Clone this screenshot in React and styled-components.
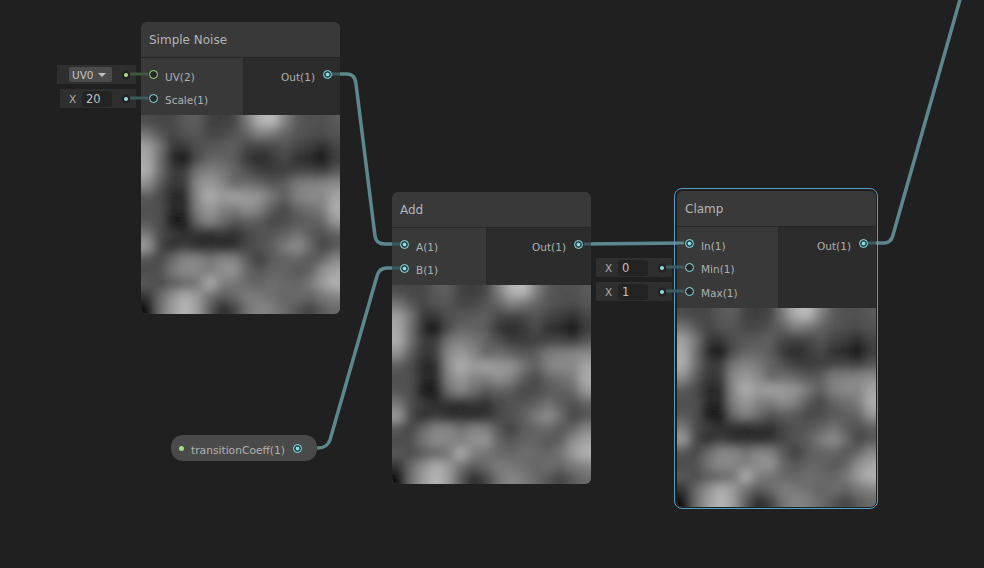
import styled, { createGlobalStyle } from "styled-components";

const GlobalStyle = createGlobalStyle`
  html, body {
    margin: 0;
    padding: 0;
    background: #202020;
  }
`;

// grey values read off the preview, one row per line
const NOISE = [
  [75, 70, 70, 90, 95, 65, 60, 70, 125, 180, 190, 130, 90, 80, 80, 90],
  [115, 85, 70, 85, 85, 70, 70, 85, 100, 130, 120, 100, 85, 80, 75, 85],
  [160, 120, 55, 55, 80, 85, 90, 95, 70, 65, 70, 85, 70, 60, 45, 70],
  [170, 110, 40, 20, 75, 100, 100, 90, 55, 40, 55, 75, 45, 40, 20, 60],
  [175, 110, 60, 60, 120, 130, 120, 100, 80, 60, 60, 60, 70, 70, 60, 85],
  [145, 90, 55, 60, 140, 155, 135, 100, 110, 100, 85, 95, 125, 130, 135, 140],
  [90, 75, 40, 40, 140, 175, 155, 165, 155, 150, 120, 95, 130, 140, 135, 165],
  [80, 80, 40, 40, 130, 155, 130, 125, 145, 130, 90, 70, 100, 110, 125, 175],
  [85, 80, 25, 25, 110, 135, 110, 85, 95, 90, 70, 75, 85, 95, 100, 155],
  [120, 75, 60, 45, 50, 40, 55, 45, 70, 80, 85, 95, 115, 90, 80, 95],
  [160, 70, 45, 60, 40, 45, 35, 45, 70, 85, 95, 125, 145, 110, 65, 85],
  [85, 70, 105, 135, 135, 115, 135, 130, 90, 60, 90, 100, 105, 85, 100, 135],
  [75, 80, 120, 140, 135, 125, 145, 150, 100, 85, 100, 100, 85, 95, 145, 165],
  [90, 75, 90, 100, 115, 180, 125, 115, 105, 100, 110, 105, 100, 120, 155, 180],
  [50, 105, 145, 175, 155, 110, 90, 105, 125, 120, 110, 100, 110, 100, 120, 130],
  [10, 110, 155, 185, 155, 90, 40, 65, 115, 135, 125, 105, 85, 65, 90, 105],
];

const TEAL = "#8fdde2";
const GREEN = "#a3e07f";
const CELL = 4;

const sample = (r, c) => NOISE[Math.min(15, Math.max(0, r))][Math.min(15, Math.max(0, c))];
const ease = (t) => t * t * (3 - 2 * t);

// smooth read of the grid, plus a little repeatable grain for the bumpy look
function noiseAt(x, y) {
  const fx = x / 12.5 - 0.5;
  const fy = y / 12.5 - 0.5;
  const c = Math.floor(fx);
  const r = Math.floor(fy);
  const tx = ease(fx - c);
  const ty = ease(fy - r);
  const top = sample(r, c) * (1 - tx) + sample(r, c + 1) * tx;
  const bottom = sample(r + 1, c) * (1 - tx) + sample(r + 1, c + 1) * tx;
  const grain = Math.sin(x * 0.79 + y * 0.31) * Math.cos(y * 0.83 - x * 0.27) * 10;
  return Math.round(Math.max(0, top * (1 - ty) + bottom * ty + grain));
}

const CELLS = [];
for (let y = -12; y < 212; y += CELL) {
  for (let x = -12; x < 212; x += CELL) {
    const v = noiseAt(x + CELL / 2, y + CELL / 2);
    CELLS.push(
      <rect
        key={x + "-" + y}
        x={x}
        y={y}
        width={CELL + 0.5}
        height={CELL + 0.5}
        fill={`rgb(${v},${v},${v})`}
      />
    );
  }
}

const Canvas = styled.div`
  position: relative;
  width: 984px;
  height: 568px;
  overflow: hidden;
  background: #202020;
  font-family: "DejaVu Sans", sans-serif;
`;

const WireLayer = styled.svg`
  position: absolute;
  inset: 0;
  z-index: ${(p) => p.$z};
  pointer-events: none;
`;

const Node = styled.div`
  position: absolute;
  left: ${(p) => p.$x}px;
  top: ${(p) => p.$y}px;
  width: 199px;
  z-index: 1;
  border-radius: 6px;
  background: #2c2c2c;
  ${(p) =>
    p.$selected &&
    `
    &::after {
      content: "";
      position: absolute;
      inset: -3px -2px -2px -3px;
      border: 1.5px solid #569cc8;
      border-radius: 8px;
    }
  `}
`;

const Title = styled.div`
  height: 35px;
  padding-left: 8px;
  display: flex;
  align-items: center;
  background: #393939;
  border-bottom: 1px solid #262626;
  border-radius: 6px 6px 0 0;
  color: #b4b4b4;
  font-size: 12px;
`;

const Ports = styled.div`
  display: flex;
  justify-content: space-between;
  height: ${(p) => (p.$tall ? 81 : 57)}px;
`;

const Inputs = styled.div`
  width: ${(p) => p.$width}px;
  padding: 4px 0;
  box-sizing: border-box;
  background: #393939;
  border-right: 1px solid #2a2a2a;
`;

const Outputs = styled.div`
  padding: 4px 0;
`;

const Row = styled.div`
  position: relative;
  height: 24px;
  display: flex;
  align-items: center;
  justify-content: ${(p) => (p.$output ? "flex-end" : "flex-start")};
  gap: ${(p) => (p.$output ? 8 : 7)}px;
  padding: ${(p) => (p.$output ? "0 8px 0 0" : "0 0 0 8px")};
  &:not(:first-child) > span:last-child {
    top: 2px;
  }
`;

const Ring = styled.span`
  position: relative;
  flex: none;
  width: 9px;
  height: 9px;
  box-sizing: border-box;
  border-radius: 50%;
  border: 1.5px solid ${(p) => p.$color};
  background: #26292a;
  ${(p) =>
    p.$connected &&
    `
    background: radial-gradient(circle, ${p.$color} 0 1.4px, #2b4a50 2.2px);
  `}
`;

const Label = styled.span`
  position: relative;
  top: 3px;
  color: #b0b0b0;
  font-size: 10.5px;
  white-space: nowrap;
`;

const Preview = styled.div`
  height: 199px;
  border-radius: 0 0 6px 6px;
  overflow: hidden;
  background: #555;
  svg {
    display: block;
  }
`;

const Prop = styled.div`
  position: absolute;
  right: calc(100% + 5px);
  top: 3px;
  width: ${(p) => p.$width}px;
  height: 19px;
  box-sizing: border-box;
  display: flex;
  align-items: center;
  padding: 0 8px 0 ${(p) => p.$pad}px;
  background: #2f2f2f;
  color: #b0b0b0;
  font-size: 10.5px;
`;

const Axis = styled.span`
  width: 13px;
  flex: none;
`;

const Field = styled.span`
  width: 30px;
  height: 16px;
  box-sizing: border-box;
  padding-left: 4px;
  display: flex;
  align-items: center;
  border-radius: 3px;
  background: #232323;
  color: #c0c0c0;
  font-size: 11.5px;
`;

const Dropdown = styled.span`
  width: 43px;
  height: 15px;
  box-sizing: border-box;
  padding: 0 6px 0 3px;
  display: flex;
  align-items: center;
  justify-content: space-between;
  border-radius: 2px;
  background: #4b4b4b;
  color: #c0c0c0;
  font-size: 10.5px;
  &::after {
    content: "";
    border-left: 4px solid transparent;
    border-right: 4px solid transparent;
    border-top: 4px solid #c0c0c0;
  }
`;

const PropDot = styled.span`
  width: 4px;
  height: 4px;
  margin-left: auto;
  border-radius: 50%;
  background: ${(p) => p.$color};
  box-shadow: 0 0 0 2.5px #222;
`;

const Pill = styled.div`
  position: absolute;
  left: 171px;
  top: 435px;
  width: 146px;
  height: 26px;
  z-index: 1;
  box-sizing: border-box;
  display: flex;
  align-items: center;
  padding: 0 15px 0 8px;
  border-radius: 12px;
  background: #4a4a4a;
`;

const PillDot = styled.span`
  width: 5px;
  height: 5px;
  flex: none;
  border-radius: 50%;
  background: ${GREEN};
`;

const PillLabel = styled(Label)`
  top: 2px;
  margin-left: 7px;
  font-size: 10.7px;
`;

const PillRing = styled(Ring)`
  margin-left: auto;
`;

function Noise() {
  return (
    <svg width="199" height="199" viewBox="0 0 199 199">
      <defs>
        <filter id="noiseBlur" x="-10%" y="-10%" width="120%" height="120%">
          <feGaussianBlur stdDeviation="4" />
        </filter>
      </defs>
      <g filter="url(#noiseBlur)">{CELLS}</g>
    </svg>
  );
}

function Input({ label, color = TEAL, connected, children }) {
  return (
    <Row>
      {children}
      <Ring $color={color} $connected={connected} />
      <Label>{label}</Label>
    </Row>
  );
}

function Output() {
  return (
    <Row $output>
      <Label>Out(1)</Label>
      <Ring $color={TEAL} $connected />
    </Row>
  );
}

export default function App() {
  return (
    <Canvas>
      <GlobalStyle />
      <WireLayer $z={0} width="984" height="568" fill="none">
        <g stroke="#5d878f" strokeWidth="3.5" strokeLinecap="round">
          <path d="M332 74 H347 Q355 74 356 84 L375 236 Q376 244 385 244 H400" />
          <path d="M400 268 H387 Q379 268 377 276 L330 440 Q327 448 318 448" />
          <path d="M584 244 L684 243" />
          <path d="M868 243 H884 Q891 243 893 235 L961 -4" />
        </g>
      </WireLayer>
      <Node $x={141} $y={22}>
        <Title>Simple Noise</Title>
        <Ports>
          <Inputs $width={103}>
            <Input label="UV(2)" color={GREEN}>
              <Prop $width={79} $pad={12}>
                <Dropdown>UV0</Dropdown>
                <PropDot $color={GREEN} />
              </Prop>
            </Input>
            <Input label="Scale(1)">
              <Prop $width={76} $pad={9}>
                <Axis>X</Axis>
                <Field>20</Field>
                <PropDot $color={TEAL} />
              </Prop>
            </Input>
          </Inputs>
          <Outputs>
            <Output />
          </Outputs>
        </Ports>
        <Preview>
          <Noise />
        </Preview>
      </Node>
      <Node $x={392} $y={192}>
        <Title>Add</Title>
        <Ports>
          <Inputs $width={95}>
            <Input label="A(1)" connected />
            <Input label="B(1)" connected />
          </Inputs>
          <Outputs>
            <Output />
          </Outputs>
        </Ports>
        <Preview>
          <Noise />
        </Preview>
      </Node>
      <Node $x={677} $y={191} $selected>
        <Title>Clamp</Title>
        <Ports $tall>
          <Inputs $width={102}>
            <Input label="In(1)" connected />
            <Input label="Min(1)">
              <Prop $width={76} $pad={9}>
                <Axis>X</Axis>
                <Field>0</Field>
                <PropDot $color={TEAL} />
              </Prop>
            </Input>
            <Input label="Max(1)">
              <Prop $width={76} $pad={9}>
                <Axis>X</Axis>
                <Field>1</Field>
                <PropDot $color={TEAL} />
              </Prop>
            </Input>
          </Inputs>
          <Outputs>
            <Output />
          </Outputs>
        </Ports>
        <Preview>
          <Noise />
        </Preview>
      </Node>
      <Pill>
        <PillDot />
        <PillLabel>transitionCoeff(1)</PillLabel>
        <PillRing $color={TEAL} $connected />
      </Pill>
      <WireLayer $z={2} width="984" height="568" fill="none">
        <g strokeWidth="3">
          <path d="M130 74 H148" stroke="#3f5a3f" />
          <path d="M130 98 H148" stroke="#3d5a5e" />
          <path d="M666 267 H684" stroke="#3d5a5e" />
          <path d="M666 291 H684" stroke="#3d5a5e" />
          <path d="M332 74 H340" stroke="#3d5a5e" />
          <path d="M392 244 H400" stroke="#3d5a5e" />
          <path d="M392 268 H400" stroke="#3d5a5e" />
          <path d="M584 244 H591" stroke="#3d5a5e" />
          <path d="M677 243 H684" stroke="#5d878f" />
          <path d="M868 243 H876" stroke="#3d5a5e" />
        </g>
      </WireLayer>
    </Canvas>
  );
}
